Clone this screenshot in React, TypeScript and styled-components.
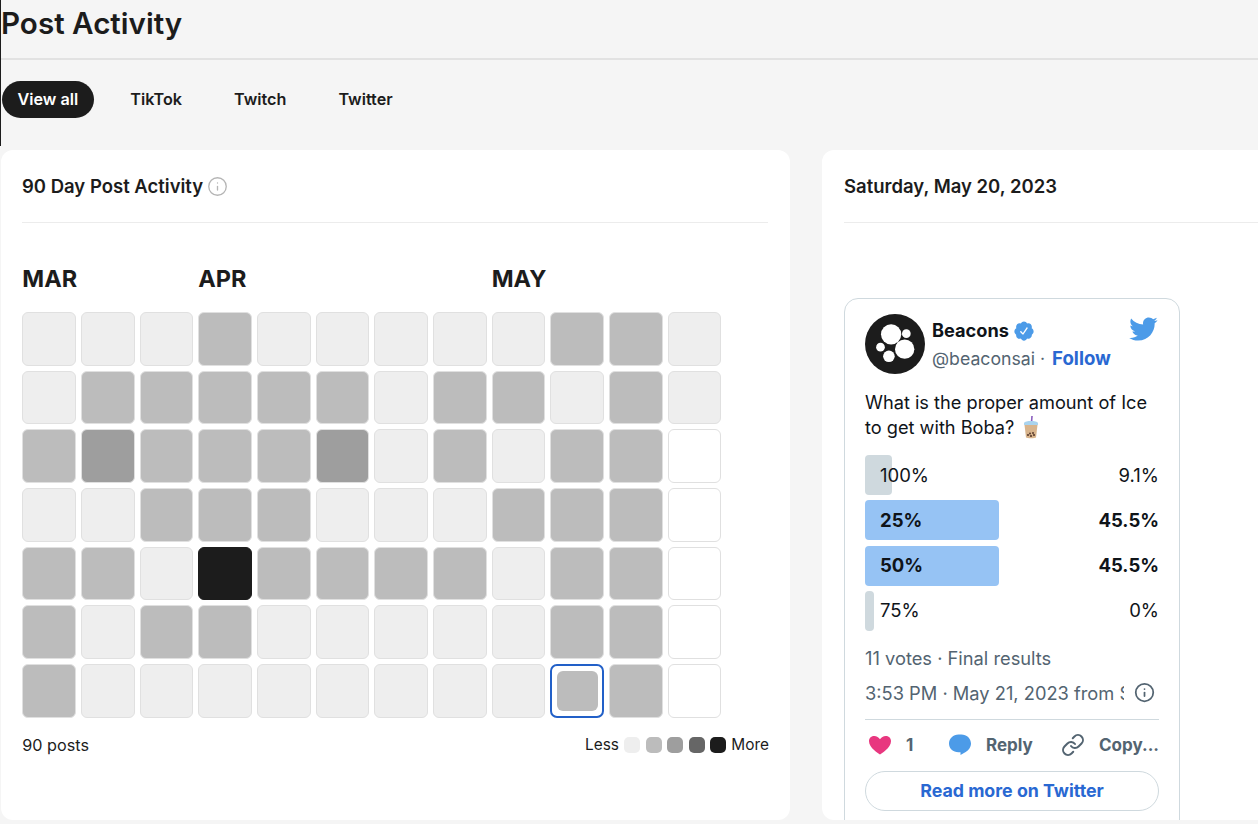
import React from "react";
import styled, { createGlobalStyle } from "styled-components";
import { Info, Link } from "lucide-react";

const GlobalStyle = createGlobalStyle`
  html, body {
    margin: 0;
    padding: 0;
    background: #f5f5f5;
  }
  * {
    box-sizing: border-box;
  }
`;

const Page = styled.div`
  width: 1258px;
  height: 824px;
  overflow: hidden;
  background: #f5f5f5;
  color: #1c1c1c;
  font-family: Inter, "Noto Sans", sans-serif;
`;

const Header = styled.header`
  height: 146px;
  border-left: 1px solid #1c1c1c;
`;

const Title = styled.h1`
  height: 60px;
  margin: 0;
  padding-bottom: 12px;
  border-bottom: 2px solid #e2e2e2;
  font-size: 29.6px;
  line-height: 46px;
  font-weight: 600;
`;

const Tabs = styled.nav`
  display: flex;
  gap: 21px;
  margin: 21px 0 0 1px;
`;

const Tab = styled.button<{ $active?: boolean }>`
  height: 37px;
  padding: 0 15.5px 2px;
  border: 0;
  border-radius: 19px;
  background: ${(p) => (p.$active ? "#1c1c1c" : "transparent")};
  color: ${(p) => (p.$active ? "#fff" : "#1c1c1c")};
  font: 600 16.2px Inter, sans-serif;
`;

const Panels = styled.main`
  display: grid;
  grid-template-columns: 789px 789px;
  gap: 32px;
  height: 670px;
  margin: 4px 0 0 1px;
`;

const Panel = styled.section`
  background: #fff;
  border-radius: 12px;
  overflow: hidden;
`;

const PanelHeader = styled.div<{ $bleed?: boolean }>`
  display: flex;
  align-items: center;
  gap: 4px;
  height: 73px;
  margin: ${(p) => (p.$bleed ? "0 0 0 22px" : "0 22px 0 21px")};
  border-bottom: 1px solid #ececec;
  font-size: 18.5px;
  font-weight: 600;
`;

const HintIcon = styled(Info)`
  width: 21px;
  height: 21px;
  color: #b5b5b5;
`;

const PanelBody = styled.div`
  padding: 0 21px 0 21.3px;
`;

const Months = styled.div`
  display: grid;
  grid-template-columns: repeat(12, 1fr);
  column-gap: 5px;
  width: 699px;
  margin-top: 41px;
  font-size: 23.5px;
  line-height: 30px;
  font-weight: 700;
`;

const Month = styled.div<{ $col: number }>`
  grid-column: ${(p) => p.$col} / span 3;
`;

const Calendar = styled.div`
  display: grid;
  grid-template-columns: repeat(12, 1fr);
  gap: 5px;
  width: 699px;
  margin-top: 18px;
`;

const levelColor: Record<string, string> = {
  w: "#fff",
  l: "#eeeeee",
  m: "#bcbcbc",
  d: "#9e9e9e",
  b: "#1c1c1c",
};

const Cell = styled.div<{ $level: string }>`
  aspect-ratio: 1;
  border-radius: 6px;
  border: 1px solid ${(p) => (p.$level === "b" ? "#1c1c1c" : "#e0e0e0")};
  background: ${(p) => levelColor[p.$level]};
`;

const SelectedCell = styled.div`
  display: flex;
  aspect-ratio: 1;
  padding: 4.5px;
  border-radius: 7px;
  border: 2.5px solid #2260c8;
  background: #fff;
  &::before {
    content: "";
    flex: 1;
    border-radius: 6px;
    background: #bcbcbc;
  }
`;

const PanelFooter = styled.div`
  display: flex;
  justify-content: space-between;
  align-items: center;
  margin: 17px 0 0 0;
  font-size: 15.4px;
  line-height: 20px;
`;

const PostCount = styled.span`
  font-size: 16.2px;
`;

const Legend = styled.div`
  display: flex;
  align-items: center;
  gap: 5.4px;
`;

const Swatch = styled.span<{ $color: string }>`
  width: 16px;
  height: 16px;
  border-radius: 5px;
  background: ${(p) => p.$color};
`;

const Tweet = styled.article`
  width: 336px;
  height: 600px;
  margin: 75px 0 0 22px;
  padding: 15px 20px 0;
  border: 1px solid #cfd9de;
  border-radius: 14px;
  color: #0f1419;
  background: #fff;
`;

const TweetTop = styled.div`
  display: flex;
  gap: 7px;
`;

const Author = styled.div`
  flex: 1;
  padding-top: 4px;
`;

const AuthorName = styled.div`
  display: flex;
  align-items: center;
  gap: 4px;
  font-size: 18.2px;
  line-height: 25px;
  font-weight: 700;
`;

const Handle = styled.div`
  margin-top: 3px;
  font-size: 17.7px;
  line-height: 25px;
  color: #536471;
`;

const FollowLink = styled.span`
  margin-left: 2px;
  font-size: 18.6px;
  color: #2968d2;
  font-weight: 700;
`;

const BirdMark = styled.svg`
  width: 30px;
  height: 30px;
  margin-right: 1px;
  fill: #4c9be8;
`;

const TweetText = styled.p`
  margin: 16px 0 0 0;
  font-size: 18.2px;
  line-height: 25px;
`;

const BobaMark = styled.svg`
  width: 20px;
  height: 23px;
  margin-left: 2px;
  vertical-align: -5px;
`;

const Poll = styled.div`
  display: flex;
  flex-direction: column;
  gap: 5.3px;
  margin-top: 15px;
`;

const PollRow = styled.div<{ $lead?: boolean }>`
  position: relative;
  display: flex;
  justify-content: space-between;
  align-items: center;
  height: 40px;
  padding: 0 0 1px 15px;
  font-size: 18.5px;
  font-weight: ${(p) => (p.$lead ? 700 : 400)};
`;

const PollBar = styled.div<{ $lead?: boolean }>`
  position: absolute;
  left: 0;
  top: 0;
  bottom: 0;
  border-radius: 4px;
  background: ${(p) => (p.$lead ? "#96c3f4" : "#cfd9de")};
`;

const PollText = styled.span`
  position: relative;
`;

const Muted = styled.div`
  font-size: 18.3px;
  line-height: 24px;
  color: #536471;
`;

const Votes = styled(Muted)`
  margin-top: 15px;
`;

const Stamp = styled.div`
  display: flex;
  justify-content: space-between;
  align-items: center;
  margin-top: 11px;
  padding-bottom: 14px;
  border-bottom: 1px solid #cfd9de;
`;

const StampText = styled(Muted)`
  width: 259px;
  overflow: hidden;
  white-space: nowrap;
`;

const StampIcon = styled(Info)`
  width: 21px;
  height: 21px;
  margin-right: 4px;
  color: #536471;
`;

const Actions = styled.div`
  display: flex;
  align-items: center;
  height: 51px;
  font-size: 17px;
  font-weight: 700;
  color: #536471;
`;

const Action = styled.div<{ $width: number }>`
  display: flex;
  align-items: center;
  gap: 14px;
  width: ${(p) => p.$width}px;
  flex: none;
  padding-left: 3px;
  white-space: nowrap;
`;

const ActionSvg = styled.svg`
  width: 24px;
  height: 24px;
  flex: none;
`;

const LinkIcon = styled(Link)`
  width: 24px;
  height: 24px;
  flex: none;
  color: #536471;
`;

const ReadMore = styled.div`
  height: 40px;
  border: 1px solid #cfd9de;
  border-radius: 20px;
  text-align: center;
  font-size: 17.8px;
  line-height: 37px;
  font-weight: 700;
  color: #2968d2;
`;

const rows = [
  "lllmlllllmml",
  "lmmmmmlmmlml",
  "mdmmmdlmlmmw",
  "llmmmlllmmmw",
  "mmlbmmmmlmmw",
  "mlmmlllllmmw",
  "mllllllllsmw",
];

const pollOptions = [
  { label: "100%", value: "9.1%", width: 27 },
  { label: "25%", value: "45.5%", width: 134, lead: true },
  { label: "50%", value: "45.5%", width: 134, lead: true },
  { label: "75%", value: "0%", width: 9 },
];

const swatches = ["#eeeeee", "#bcbcbc", "#9e9e9e", "#666666", "#1c1c1c"];

const Avatar = () => (
  <svg width="60" height="60" viewBox="-31 -31 62 62">
    <circle r="31" fill="#1c1c1c" />
    <g fill="#fff">
      <circle cx="-4" cy="-10" r="10.5" />
      <circle cx="11.7" cy="-10.7" r="4.5" />
      <circle cx="-15" cy="3.3" r="4.5" />
      <circle cx="10" cy="5.3" r="10" />
      <circle cx="-6.3" cy="12.7" r="6" />
    </g>
  </svg>
);

const Verified = () => (
  <svg width="22" height="22" viewBox="0 0 24 24">
    <path
      fill="#4c9be8"
      d="M22.5 12.5c0-1.58-.875-2.95-2.148-3.6.154-.435.238-.905.238-1.4 0-2.21-1.71-3.998-3.818-3.998-.47 0-.92.084-1.336.25C14.818 2.415 13.51 1.5 12 1.5s-2.816.917-3.437 2.25c-.415-.165-.866-.25-1.336-.25-2.11 0-3.818 1.79-3.818 4 0 .494.083.964.237 1.4-1.272.65-2.147 2.018-2.147 3.6 0 1.495.782 2.798 1.942 3.486-.02.17-.032.34-.032.514 0 2.21 1.708 4 3.818 4 .47 0 .92-.086 1.335-.25.62 1.334 1.926 2.25 3.437 2.25 1.512 0 2.818-.916 3.437-2.25.415.163.865.248 1.336.248 2.11 0 3.818-1.79 3.818-4 0-.174-.012-.344-.033-.513 1.158-.687 1.943-1.99 1.943-3.484zm-6.616-3.334l-4.334 6.5c-.145.217-.382.334-.625.334-.143 0-.288-.04-.416-.126l-.115-.094-2.415-2.415c-.293-.293-.293-.768 0-1.06s.768-.294 1.06 0l1.77 1.767 3.825-5.74c.23-.345.696-.436 1.04-.207.346.23.44.696.21 1.04z"
    />
  </svg>
);

const Boba = () => (
  <BobaMark viewBox="0 0 20 23">
    <path d="M11 0l-.6 8" stroke="#8b5fbf" strokeWidth="1.6" />
    <path d="M3 7c1-2.6 13-2.6 14 0v2H3z" fill="#a9d3ee" />
    <path d="M3.5 9h13l-1.5 12.5c-1 1-9 1-10 0z" fill="#d8b48c" />
    <g fill="#5b3d2e">
      <circle cx="7" cy="19" r="1.1" />
      <circle cx="10" cy="20" r="1.1" />
      <circle cx="13" cy="19" r="1.1" />
      <circle cx="9" cy="17.4" r="1" />
      <circle cx="12" cy="17" r="1" />
    </g>
  </BobaMark>
);

export default function App() {
  return (
    <Page>
      <GlobalStyle />
      <Header>
        <Title>Post Activity</Title>
        <Tabs>
          <Tab $active>View all</Tab>
          <Tab>TikTok</Tab>
          <Tab>Twitch</Tab>
          <Tab>Twitter</Tab>
        </Tabs>
      </Header>
      <Panels>
        <Panel>
          <PanelHeader>
            90 Day Post Activity
            <HintIcon strokeWidth={1.5} />
          </PanelHeader>
          <PanelBody>
            <Months>
              <Month $col={1}>MAR</Month>
              <Month $col={4}>APR</Month>
              <Month $col={9}>MAY</Month>
            </Months>
            <Calendar>
              {rows.flatMap((row, r) =>
                row.split("").map((level, c) =>
                  level === "s" ? (
                    <SelectedCell key={`${r}-${c}`} />
                  ) : (
                    <Cell key={`${r}-${c}`} $level={level} />
                  )
                )
              )}
            </Calendar>
            <PanelFooter>
              <PostCount>90 posts</PostCount>
              <Legend>
                Less
                {swatches.map((color) => (
                  <Swatch key={color} $color={color} />
                ))}
                More
              </Legend>
            </PanelFooter>
          </PanelBody>
        </Panel>
        <Panel>
          <PanelHeader $bleed>Saturday, May 20, 2023</PanelHeader>
          <Tweet>
            <TweetTop>
              <Avatar />
              <Author>
                <AuthorName>
                  Beacons
                  <Verified />
                </AuthorName>
                <Handle>
                  @beaconsai · <FollowLink>Follow</FollowLink>
                </Handle>
              </Author>
              <BirdMark viewBox="0 0 24 24">
                <path d="M23.643 4.937c-.835.37-1.732.62-2.675.727.962-.576 1.7-1.49 2.048-2.578-.9.534-1.897.922-2.958 1.13-.85-.904-2.06-1.47-3.4-1.47-2.572 0-4.658 2.086-4.658 4.66 0 .364.042.718.12 1.06-3.873-.195-7.304-2.05-9.602-4.868-.4.69-.63 1.49-.63 2.342 0 1.616.823 3.043 2.072 3.878-.764-.025-1.482-.234-2.11-.583v.06c0 2.257 1.605 4.14 3.737 4.568-.392.106-.803.162-1.227.162-.3 0-.593-.028-.877-.082.593 1.85 2.313 3.198 4.352 3.234-1.595 1.25-3.604 1.995-5.786 1.995-.376 0-.747-.022-1.112-.065 2.062 1.323 4.51 2.093 7.14 2.093 8.57 0 13.255-7.098 13.255-13.254 0-.2-.005-.402-.014-.602.91-.658 1.7-1.477 2.323-2.41z" />
              </BirdMark>
            </TweetTop>
            <TweetText>
              What is the proper amount of Ice
              <br />
              to get with Boba? <Boba />
            </TweetText>
            <Poll>
              {pollOptions.map((o) => (
                <PollRow key={o.label} $lead={o.lead}>
                  <PollBar $lead={o.lead} style={{ width: o.width }} />
                  <PollText>{o.label}</PollText>
                  <PollText>{o.value}</PollText>
                </PollRow>
              ))}
            </Poll>
            <Votes>11 votes · Final results</Votes>
            <Stamp>
              <StampText>3:53 PM · May 21, 2023 from San Francisco</StampText>
              <StampIcon strokeWidth={2} />
            </Stamp>
            <Actions>
              <Action $width={80}>
                <ActionSvg viewBox="0 0 24 24">
                  <path
                    fill="#e8377f"
                    d="M12 21.5c-1.2-.9-11-6.6-11-13.3C1 4.8 3.6 3 6.3 3 8.6 3 10.8 4.3 12 6.2 13.2 4.3 15.4 3 17.7 3 20.4 3 23 4.8 23 8.2c0 6.7-9.8 12.4-11 13.3z"
                  />
                </ActionSvg>
                1
              </Action>
              <Action $width={113}>
                <ActionSvg viewBox="0 0 24 24">
                  <path
                    fill="#4c9be8"
                    d="M10.5 1.5h2.8c5.4 0 9.7 3.9 9.7 9 0 3.6-2.4 6.7-5.3 8.4l-5.2 3.2v-2.8h-2C5 19.3 1 15.5 1 10.6c0-5.1 4.2-9.1 9.5-9.1z"
                  />
                </ActionSvg>
                Reply
              </Action>
              <Action $width={98}>
                <LinkIcon strokeWidth={2} />
                Copy...
              </Action>
            </Actions>
            <ReadMore>Read more on Twitter</ReadMore>
          </Tweet>
        </Panel>
      </Panels>
    </Page>
  );
}
